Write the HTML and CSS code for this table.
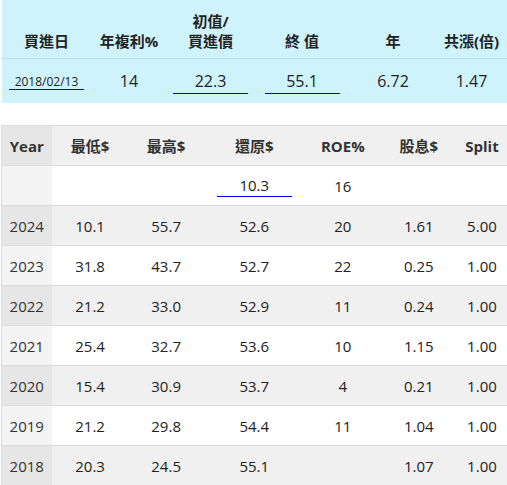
FILE: index.html
```html
<!DOCTYPE html>
<html>
<head>
  <meta charset="utf-8">
  <link rel="stylesheet" href="styles.css">
</head>
<body>
  <div class="summary">
    <div class="summary-head">
      <div class="cell">買進日</div>
      <div class="cell">年複利%</div>
      <div class="cell">初值/<br>買進價</div>
      <div class="cell">終 值</div>
      <div class="cell">年</div>
      <div class="cell">共漲(倍)</div>
    </div>
    <div class="summary-row">
      <div class="cell date-cell"><input class="date-input" type="text" value="2018/02/13"></div>
      <div class="cell">14</div>
      <div class="cell input-cell"><input class="num-input" type="text" value="22.3"></div>
      <div class="cell input-cell"><input class="num-input" type="text" value="55.1"></div>
      <div class="cell">6.72</div>
      <div class="cell">1.47</div>
    </div>
  </div>

  <table class="history">
    <colgroup>
      <col style="width: 50px">
      <col style="width: 77px">
      <col style="width: 75px">
      <col style="width: 101px">
      <col style="width: 76px">
      <col style="width: 76px">
      <col style="width: 50px">
    </colgroup>
    <thead>
      <tr>
        <th class="year">Year</th>
        <th>最低$</th>
        <th>最高$</th>
        <th>還原$</th>
        <th>ROE%</th>
        <th>股息$</th>
        <th>Split</th>
      </tr>
    </thead>
    <tbody>
      <tr>
        <td class="year"></td>
        <td></td>
        <td></td>
        <td class="input-td"><input class="num-input small" type="text" value="10.3"></td>
        <td>16</td>
        <td></td>
        <td></td>
      </tr>
      <tr><td class="year">2024</td><td>10.1</td><td>55.7</td><td>52.6</td><td>20</td><td>1.61</td><td>5.00</td></tr>
      <tr><td class="year">2023</td><td>31.8</td><td>43.7</td><td>52.7</td><td>22</td><td>0.25</td><td>1.00</td></tr>
      <tr><td class="year">2022</td><td>21.2</td><td>33.0</td><td>52.9</td><td>11</td><td>0.24</td><td>1.00</td></tr>
      <tr><td class="year">2021</td><td>25.4</td><td>32.7</td><td>53.6</td><td>10</td><td>1.15</td><td>1.00</td></tr>
      <tr><td class="year">2020</td><td>15.4</td><td>30.9</td><td>53.7</td><td>4</td><td>0.21</td><td>1.00</td></tr>
      <tr><td class="year">2019</td><td>21.2</td><td>29.8</td><td>54.4</td><td>11</td><td>1.04</td><td>1.00</td></tr>
      <tr><td class="year">2018</td><td>20.3</td><td>24.5</td><td>55.1</td><td></td><td>1.07</td><td>1.00</td></tr>
    </tbody>
  </table>
</body>
</html>
```

FILE: styles.css
```css
body {
  margin: 0;
  padding: 0;
  font-family: 'Open Sans', 'Noto Sans CJK TC', sans-serif;
  color: #222;
  background: #fff;
  overflow: hidden;
}

/* Top summary panel */
.summary {
  margin-left: 2px;
  background: #cff3fb;
}

.summary-head,
.summary-row {
  display: grid;
  grid-template-columns: 89px 76px 87px 96px 86px 71px;
}

.summary-head {
  height: 59px;
  border-bottom: 1px solid #b8dde7;
  box-sizing: border-box;
}

.summary-head .cell {
  align-self: end;
  padding-bottom: 7px;
  text-align: center;
  font-size: 15px;
  font-weight: 700;
  line-height: 20px;
  color: #222;
}

.summary-row {
  height: 44px;
  align-items: start;
}

.summary-row .cell {
  text-align: center;
  font-size: 16px;
  line-height: 44px;
}

.summary-row .input-cell {
  line-height: normal;
  padding-top: 10px;
}

.summary-row .date-cell {
  line-height: normal;
  padding-top: 14px;
}

.date-input,
.num-input {
  display: block;
  box-sizing: border-box;
  font-family: 'Open Sans', sans-serif;
  color: #222;
  background: transparent;
  border: none;
  border-bottom: 1px solid #0000ee;
  border-radius: 0;
  outline: none;
  text-align: center;
  padding: 0;
  margin: 0 auto;
  width: 75px;
}

.date-input {
  font-size: 12px;
  height: 17px;
}

.num-input {
  font-size: 16px;
  height: 25px;
}

.num-input.small {
  font-size: 15px;
  height: 24px;
}

/* History table */
.history {
  margin: 22px 0 0 1px;
  border-collapse: collapse;
  table-layout: fixed;
  width: 506px;
  border-left: 1px solid #dcdce0;
}

.history th,
.history td {
  height: 39px;
  padding: 0;
  text-align: center;
  vertical-align: middle;
  border-bottom: 1px solid #dcdce0;
  font-size: 15px;
}

.history td.input-td {
  vertical-align: top;
  padding-top: 7px;
  height: 32px;
}

.history thead tr {
  border-top: 1px solid #dcdce0;
}

.history th {
  background: #f0f0f0;
  font-weight: 700;
  color: #333;
}

.history th.year {
  background: #e6e6e6;
}

.history td.year {
  background: #f4f4f4;
  color: #333;
}

.history tbody tr:nth-child(even) td {
  background: #f0f0f0;
}

.history tbody tr:nth-child(even) td.year {
  background: #e6e6e6;
}
```
